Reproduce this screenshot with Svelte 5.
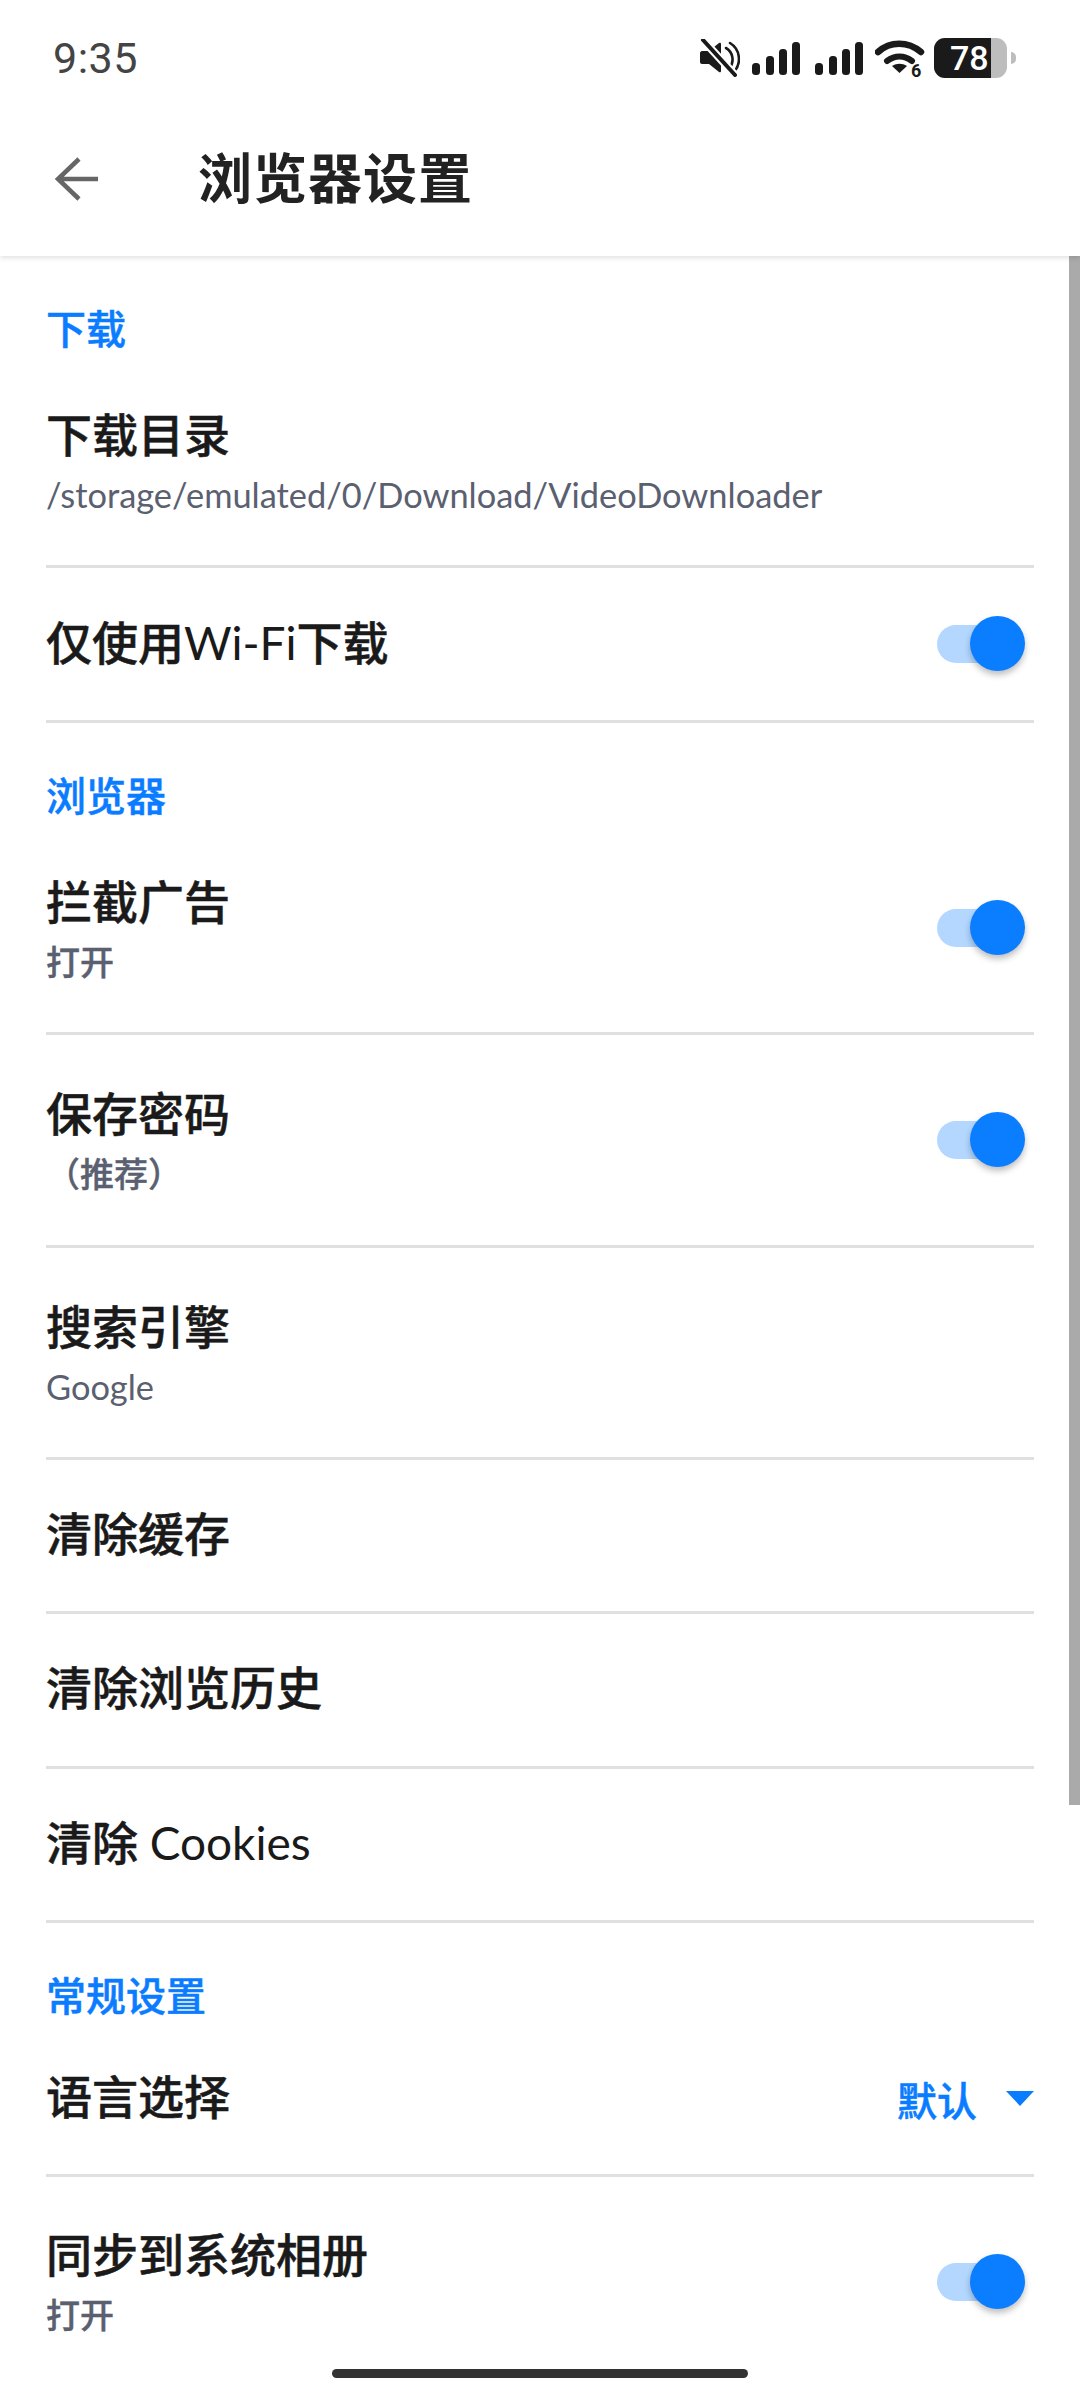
<script>
	const sections = [
		{
			title: '下载',
			rows: [
				{ title: '下载目录', sub: '/storage/emulated/0/Download/VideoDownloader' },
				{ title: '仅使用Wi-Fi下载', toggle: true }
			]
		},
		{
			title: '浏览器',
			rows: [
				{ title: '拦截广告', sub: '打开', strong: true, toggle: true },
				{ title: '保存密码', sub: '（推荐）', strong: true, toggle: true },
				{ title: '搜索引擎', sub: 'Google' },
				{ title: '清除缓存' },
				{ title: '清除浏览历史' },
				{ title: '清除 Cookies' }
			]
		},
		{
			title: '常规设置',
			rows: [
				{ title: '语言选择', select: '默认' },
				{ title: '同步到系统相册', sub: '打开', strong: true, toggle: true, last: true }
			]
		}
	]

	// latin runs stay regular weight, only the chinese is heavy
	const parts = (s) => s.split(/([A-Za-z-]+)/)
</script>

<div class="page">
	<header class="status">
		<span class="time">9:35</span>
		<div class="status-icons">
			<svg width="40" height="38" viewBox="0 0 40 38" fill="#1a1a1a">
				<path d="M2 12h7l10-8c1-.6 2-.2 2 1v27c0 1.200-1 1.600-2 1l-10-8H2c-1 0-2-1-2-2V14c0-1 1-2 2-2z" />
				<path d="M26 9c7 4 9 14 3 21M30 4c10 6 12 20 4 29" fill="none" stroke="#1a1a1a" stroke-width="2.600" stroke-linecap="round" />
				<path d="M3 1l32 35" stroke="#fff" stroke-width="8" />
				<path d="M3 1l32 35" stroke="#1a1a1a" stroke-width="4" stroke-linecap="round" />
			</svg>
			<svg class="signal" width="50" height="33" viewBox="0 0 50 33" fill="#1a1a1a">
				<rect x="0" y="21" width="8" height="12" rx="3.500" />
				<rect x="14" y="14" width="8" height="19" rx="3.500" />
				<rect x="27" y="7" width="8" height="26" rx="3.500" />
				<rect x="40" y="0" width="8" height="33" rx="3.500" />
			</svg>
			<svg class="signal next" width="50" height="33" viewBox="0 0 50 33" fill="#1a1a1a">
				<rect x="0" y="21" width="8" height="12" rx="3.500" />
				<rect x="14" y="14" width="8" height="19" rx="3.500" />
				<rect x="27" y="7" width="8" height="26" rx="3.500" />
				<rect x="40" y="0" width="8" height="33" rx="3.500" />
			</svg>
			<svg class="wifi" width="52" height="42" viewBox="0 -2 52 42">
				<path d="M3 13C15 2 33 2 46 13" fill="none" stroke="#1a1a1a" stroke-width="6.500" stroke-linecap="round" />
				<path d="M12 22c8-6 17-6 25 0" fill="none" stroke="#1a1a1a" stroke-width="6" stroke-linecap="round" />
				<path d="M17 27c5-3 10-3 15 0l-7.500 7z" fill="#1a1a1a" />
				<text x="36" y="37.500" class="wifi-six">6</text>
			</svg>
			<div class="battery">
				<div class="battery-body"><span class="battery-fill">78</span></div>
				<div class="battery-nub"></div>
			</div>
		</div>
	</header>

	<div class="appbar">
		<svg width="44" height="44" viewBox="0 0 44 44" fill="none" stroke="#666" stroke-width="4.500">
			<path d="M46 22H3M25 2L4 22l21 20" />
		</svg>
		<h1>浏览器设置</h1>
	</div>

	<main class="content">
		<div class="scrollbar"></div>
		{#each sections as section}
			<h2>{section.title}</h2>
			{#each section.rows as row}
				<div class="row" class:double={row.sub} class:last={row.last}>
					<div class="text">
						<div class="title">
							{#each parts(row.title) as part, i}
								{#if i % 2}<span class="latin">{part}</span>{:else}{part}{/if}
							{/each}
						</div>
						{#if row.sub}
							<div class="sub" class:strong={row.strong}>{row.sub}</div>
						{/if}
					</div>
					{#if row.toggle}
						<div class="toggle"><div class="knob"></div></div>
					{/if}
					{#if row.select}
						<div class="select">
							<span>{row.select}</span>
							<i class="caret"></i>
						</div>
					{/if}
				</div>
			{/each}
		{/each}
	</main>

	<div class="home"></div>
</div>

<style>
	:global(body) {
		margin: 0;
		background: #fff;
	}

	.page {
		position: relative;
		width: 1080px;
		height: 2400px;
		overflow: hidden;
		background: #fff;
		font-family: Lato, 'Noto Sans CJK SC', sans-serif;
		color: #1a1a1a;
	}

	.status {
		position: relative;
		z-index: 2;
		height: 116px;
		display: flex;
		align-items: center;
		justify-content: space-between;
		padding: 0 64px 0 53px;
		box-sizing: border-box;
		background: #fff;
	}

	.time {
		font-family: Roboto, sans-serif;
		font-size: 43px;
		color: #444;
		letter-spacing: 0.5px;
	}

	.status-icons {
		display: flex;
		align-items: center;
	}

	.signal {
		margin-left: 12px;
	}

	.signal.next {
		margin-left: 13px;
	}

	.wifi {
		margin-left: 10px;
	}

	.wifi-six {
		font-family: Roboto, sans-serif;
		font-size: 18px;
		font-weight: 700;
		fill: #1a1a1a;
	}

	.battery {
		display: flex;
		align-items: center;
		margin-left: 7px;
	}

	.battery-body {
		width: 73px;
		height: 40px;
		border-radius: 11px;
		background: #bdbdbd;
		overflow: hidden;
	}

	.battery-fill {
		display: block;
		width: 57px;
		height: 40px;
		box-sizing: border-box;
		padding-left: 16px;
		background: #1a1a1a;
		color: #fff;
		font-family: Roboto, sans-serif;
		font-size: 34px;
		font-weight: 500;
		line-height: 40px;
	}

	.battery-nub {
		width: 5px;
		height: 12px;
		margin-left: 4px;
		border-radius: 0 5px 5px 0;
		background: #bdbdbd;
	}

	.appbar {
		height: 140px;
		display: flex;
		align-items: center;
		padding: 0 0 14px 54px;
		box-sizing: border-box;
		box-shadow: 0 2px 5px rgba(0, 0, 0, 0.12);
		position: relative;
		z-index: 1;
	}

	.appbar h1 {
		margin: 0 0 0 100px;
		font-size: 54px;
		font-weight: 700;
		letter-spacing: 1px;
		line-height: 1;
		color: #222;
	}

	.content {
		position: relative;
		padding: 0 46px;
	}

	.scrollbar {
		position: absolute;
		top: 0;
		right: 0;
		width: 11px;
		height: 1549px;
		background: #aaa;
	}

	h2 {
		margin: 0;
		height: 100.15px;
		padding-top: 50px;
		box-sizing: border-box;
		font-size: 40px;
		font-weight: 500;
		-webkit-text-stroke: 0.5px #0a7cff;
		line-height: 46px;
		color: #0a7cff;
	}

	.row {
		height: 154.33px;
		display: flex;
		align-items: center;
		justify-content: space-between;
		box-sizing: border-box;
		border-bottom: 3px solid #e0e0e0;
	}

	.row.double {
		height: 212.33px;
	}

	.text {
		padding-bottom: 3px;
	}

	.row.double .text {
		padding-top: 12px;
	}

	.row.last {
		border-bottom-color: transparent;
	}

	.row.last .text {
		padding-top: 9px;
	}

	.title {
		font-size: 46px;
		font-weight: 500;
		-webkit-text-stroke: 0.5px #1a1a1a;
		line-height: 58px;
	}

	.latin {
		font-weight: 400;
		-webkit-text-stroke: 0;
	}

	.sub {
		margin-top: 2px;
		font-size: 34.4px;
		line-height: 58px;
		color: #5a6070;
	}

	.sub.strong {
		font-size: 34px;
		font-weight: 500;
		-webkit-text-stroke: 0.4px #5a6070;
	}

	.toggle {
		position: relative;
		width: 72px;
		height: 38px;
		margin-right: 25px;
		border-radius: 19px;
		background: #b3d7ff;
	}

	.knob {
		position: absolute;
		top: -9px;
		right: -16px;
		width: 55px;
		height: 55px;
		border-radius: 50%;
		background: #0a7eff;
		box-shadow: 0 4px 6px rgba(0, 0, 0, 0.25);
	}

	.select {
		display: flex;
		align-items: center;
		font-size: 40px;
		font-weight: 500;
		-webkit-text-stroke: 0.5px #0a7cff;
		color: #0a7cff;
	}

	.caret {
		width: 0;
		height: 0;
		margin-left: 29px;
		border-left: 14.500px solid transparent;
		border-right: 14.500px solid transparent;
		border-top: 15px solid #0a7cff;
	}

	.home {
		position: absolute;
		left: 332px;
		bottom: 22px;
		width: 416px;
		height: 9px;
		border-radius: 5px;
		background: #333;
	}
</style>
